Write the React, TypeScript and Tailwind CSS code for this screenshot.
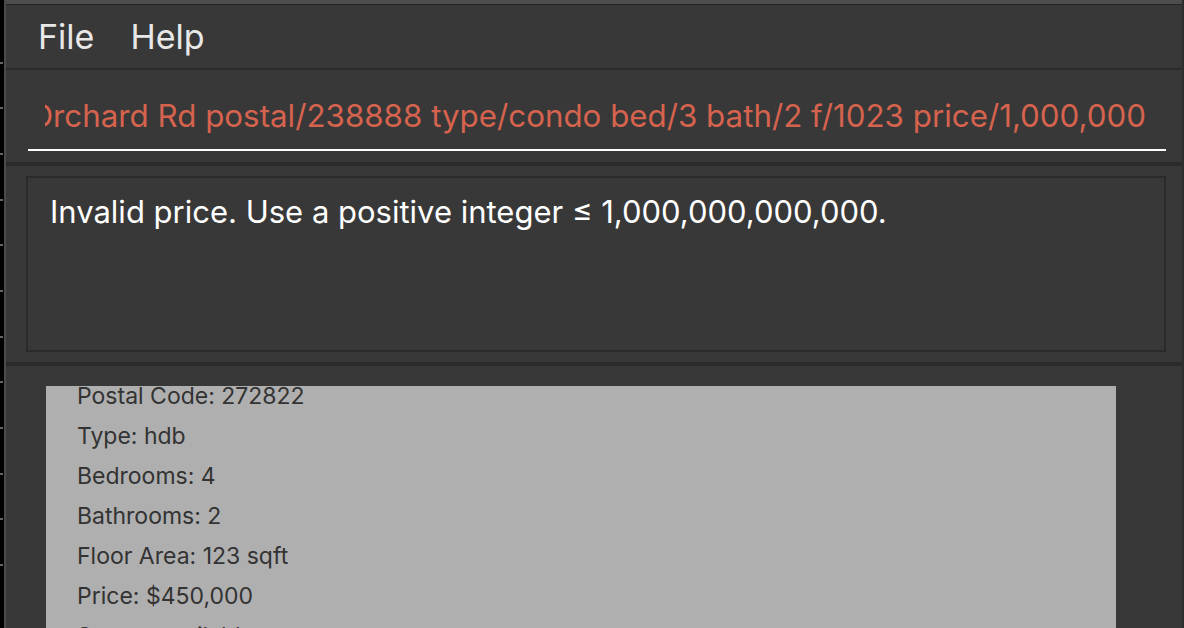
import React from 'react';

const FONT = { fontFamily: 'Inter, "Noto Sans", sans-serif' };

const details = [
  'Address: 12 Clementi Ave 3',
  'Postal Code: 272822',
  'Type: hdb',
  'Bedrooms: 4',
  'Bathrooms: 2',
  'Floor Area: 123 sqft',
  'Price: $450,000',
  'Status: available',
];

function Separator({ h = 'h-[3px]' }: { h?: string }) {
  return <div className={`${h} shrink-0 bg-[#2b2b2b]`} />;
}

export default function App() {
  return (
    <div className="flex h-[628px] w-[1184px] overflow-hidden bg-[#383838]" style={FONT}>
      {/* edge of the window behind */}
      <div className="flex h-full w-[4px] shrink-0 flex-col justify-around bg-black py-10">
        {Array.from({ length: 12 }).map((_, i) => (
          <div key={i} className="h-[2px] w-[3px] bg-[#666]" />
        ))}
      </div>
      <div className="w-[2px] shrink-0 bg-[#4a4a4a]" />

      <div className="flex min-w-0 flex-1 flex-col">
        <div className="h-[4px] shrink-0 bg-[#4d4d4d]" />
        <div className="h-px shrink-0 bg-[#262626]" />

        {/* Menu bar */}
        <div className="flex h-[63px] shrink-0 items-center gap-[36px] pl-[32px] text-[34px] text-[#e8e8e8]">
          <span>File</span>
          <span>Help</span>
        </div>
        <Separator h="h-[2px]" />

        {/* Command box */}
        <div className="h-[92px] shrink-0 pl-[22px] pr-[16px] pt-[28px]">
          <div className="pl-[17px] pr-[20px]">
            <div className="flex justify-end overflow-hidden whitespace-nowrap text-[31.3px] leading-[36px] text-[#d6634e]">
              <span>add a/1 Orchard Rd postal/238888 type/condo bed/3 bath/2 f/1023 price/1,000,000</span>
            </div>
          </div>
          <div className="mt-[15px] h-[2px] bg-white" />
        </div>
        <Separator h="h-[4px]" />

        {/* Result display */}
        <div className="h-[196px] shrink-0 pl-[20px] pr-[16px] pt-[10px]">
          <div className="h-[176px] border-2 border-[#2a2a2a] px-[22px] pt-[14px] text-[31px] leading-[40px] text-white">
            Invalid price. Use a positive integer ≤ 1,000,000,000,000.
          </div>
        </div>
        <Separator h="h-[4px]" />

        {/* Listing panel */}
        <div className="flex-1 overflow-hidden pl-[40px] pr-[66px] pt-[20px]">
          <div className="h-full overflow-hidden bg-[#afafaf]">
            <div className="-mt-[50px] flex flex-col pl-[31px] text-[23px] leading-[40px] text-[#333333]">
              {details.map((d) => (
                <div key={d}>{d}</div>
              ))}
            </div>
          </div>
        </div>
      </div>

      <div className="w-[2px] shrink-0 bg-[#2e2e2e]" />
    </div>
  );
}
